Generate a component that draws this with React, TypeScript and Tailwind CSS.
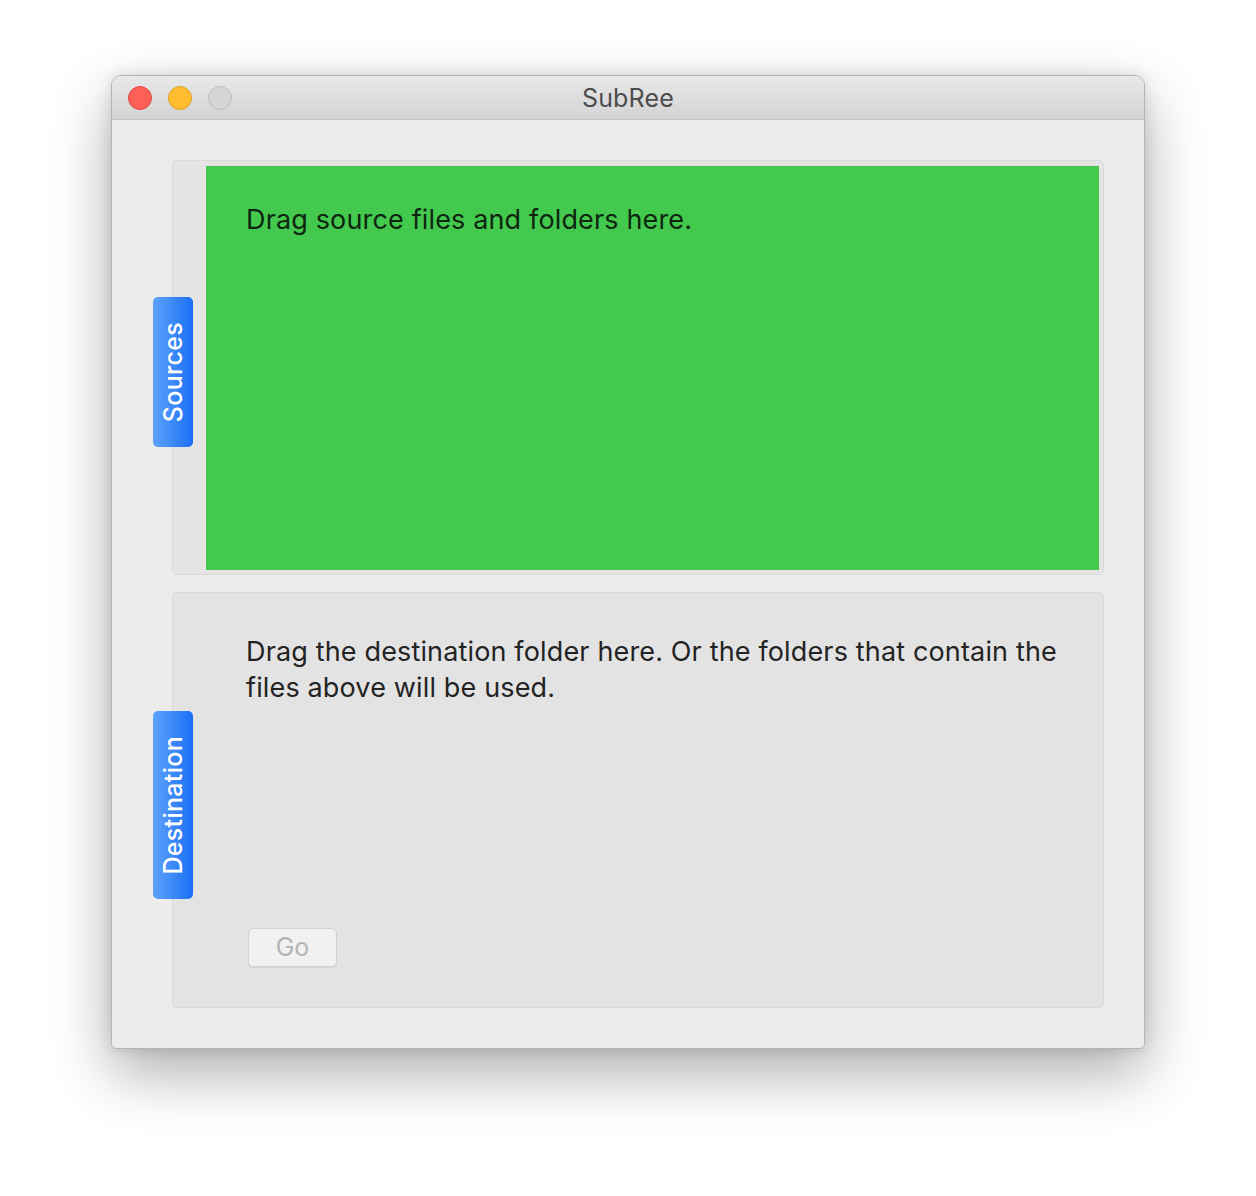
export default function App() {
  return (
    <div className="w-[1256px] h-[1196px] bg-white pt-[75px] pl-[111px] font-['Inter','Noto_Sans',sans-serif]">
      <div className="w-[1034px] h-[974px] flex flex-col rounded-t-[10px] rounded-b-[5px] border border-[#b4b4b4] bg-[#ececec] overflow-hidden shadow-[0_24px_60px_rgba(0,0,0,0.32),0_0_14px_rgba(0,0,0,0.12)]">
        {/* title bar */}
        <div className="relative h-[44px] shrink-0 flex items-center justify-center bg-linear-to-b from-[#e9e8e9] to-[#d5d4d5] border-b border-[#c3c3c3]">
          <div className="absolute left-[16px] top-[10px] flex gap-[16px]">
            <span className="w-[24px] h-[24px] rounded-full bg-[#fe5f57] border border-[#e2463f]" />
            <span className="w-[24px] h-[24px] rounded-full bg-[#febc2e] border border-[#dfa023]" />
            <span className="w-[24px] h-[24px] rounded-full bg-[#d6d5d6] border border-[#bdbcbd]" />
          </div>
          <span className="text-[25px] leading-none pt-[2px] text-[#4c4c4c] tracking-[0.2px]">SubRee</span>
        </div>

        {/* content */}
        <div className="flex-1 flex flex-col gap-[17px] pt-[40px] pl-[60px] pr-[40px] pb-[40px]">
          <div className="relative h-[415px] rounded-[5px] bg-[#e4e4e4] border border-[#dadada] pl-[33px] pt-[5px] pr-[4px] pb-[4px]">
            <div className="h-full bg-[#43ca4e] pl-[40px] pt-[36px]">
              <p className="text-[27px] leading-[36px] text-[#0e2510] tracking-[0.15px]">Drag source files and folders here.</p>
            </div>
            <Tab label="Sources" className="top-[136px] h-[150px]" />
          </div>

          <div className="relative h-[416px] rounded-[5px] bg-[#e3e3e3] border border-[#dadada] pl-[73px] pr-[36px] pt-[41px] pb-[40px] flex flex-col">
            <p className="text-[27px] leading-[36px] text-[#232323] tracking-[0.15px]">
              Drag the destination folder here. Or the folders that contain the files above will be used.
            </p>
            <div className="mt-auto pl-[2px]">
              <button className="w-[89px] h-[39px] rounded-[5px] bg-[#f1f1f1] border border-[#d2d2d2] shadow-[0_1px_1px_rgba(0,0,0,0.08)] text-[25px] leading-none text-[#b4b4b4]">
                Go
              </button>
            </div>
            <Tab label="Destination" className="top-[118px] h-[188px]" />
          </div>
        </div>
      </div>
    </div>
  );
}

function Tab({ label, className }: { label: string; className: string }) {
  return (
    <div
      className={`absolute left-[-20px] w-[40px] rounded-[5px] bg-linear-to-r from-[#5da2fb] to-[#176ef5] flex items-center justify-center ${className}`}
    >
      <span className="[writing-mode:vertical-rl] rotate-180 text-white text-[25px] font-medium leading-none tracking-[0.3px]">{label}</span>
    </div>
  );
}
